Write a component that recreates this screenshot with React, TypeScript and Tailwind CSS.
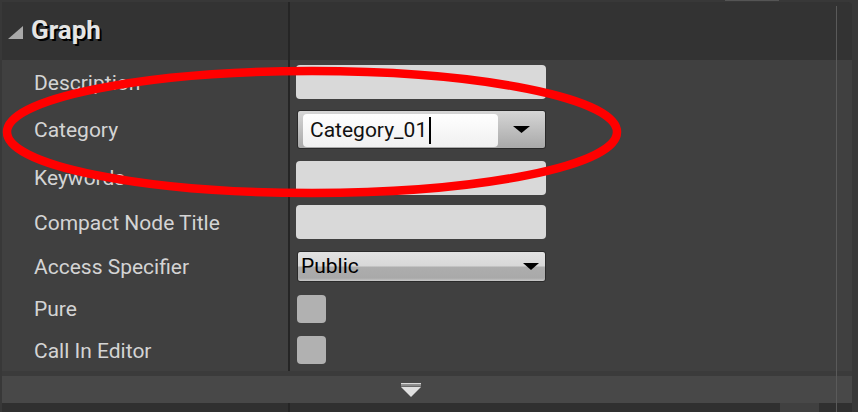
import React from "react";

const TextBox = () => <div className="w-[250px] h-[34px] bg-[#d9d9d9] rounded-[4px]" />;

const Checkbox = () => <div className="ml-[1px] w-[29px] h-[28px] bg-[#b1b1b1] rounded-[4px]" />;

const Arrow = ({ w, h }: { w: number; h: number }) => (
  <svg width={w} height={h} viewBox={`0 0 ${w} ${h}`}>
    <polygon points={`0,0 ${w},0 ${w / 2},${h}`} fill="#000" />
  </svg>
);

const CategoryCombo = () => (
  <div className="ml-[1px] w-[249px] h-[39px] rounded-[3px] border border-[#2a2a2a] bg-gradient-to-b from-[#d6d6d6] to-[#a9a9a9] flex items-stretch">
    <div className="ml-[5px] mt-[3px] mb-[1px] w-[195px] rounded-[4px] bg-gradient-to-b from-[#ffffff] to-[#f0f0f0] flex items-center pl-[7px]">
      <span className="text-[21px] text-[#111] leading-none font-['Roboto',sans-serif]">Category_01</span>
      <span className="ml-[2px] w-[2px] h-[27px] bg-[#000]" />
    </div>
    <div className="flex-1 flex items-center justify-center">
      <Arrow w={17} h={7} />
    </div>
  </div>
);

const AccessDropdown = () => (
  <div className="ml-[1px] w-[249px] h-[31px] rounded-[3px] border border-[#2a2a2a] overflow-hidden relative bg-[linear-gradient(to_bottom,#e2e2e2_0%,#d8d8d8_48%,#adadad_52%,#a9a9a9_90%,#c8c8c8_100%)] flex items-center pl-[3px] pr-[6px]">
    <span className="flex-1 text-[21px] text-[#000] leading-none font-['Roboto',sans-serif]">Public</span>
    <Arrow w={16} h={7} />
  </div>
);

const Row = ({ label, h, children }: { label: string; h: string; children: React.ReactNode }) => (
  <div className={`flex ${h}`}>
    <div className="w-[286px] flex items-center pl-[32px] pt-[3px] text-[21px] text-[#d4d4d4] font-['Roboto',sans-serif]">
      {label}
    </div>
    <div className="w-[2px] bg-[#252525]" />
    <div className="flex-1 flex items-center pl-[6px]">{children}</div>
  </div>
);

export default function App() {
  return (
    <div className="w-[858px] h-[412px] bg-[#383838] relative overflow-hidden font-['Roboto',sans-serif]">
      {/* top strip */}
      <div className="h-[2px] flex">
        <div className="ml-[725px] w-[54px] h-[1px] bg-[#555555]" />
      </div>
      <div className="ml-[2px] w-[850px] flex flex-col">
        {/* header */}
        <div className="h-[58px] flex bg-[#333333] rounded-tr-[4px]">
          <div className="w-[286px] flex items-center pl-[6px] pb-[2px]">
            <svg width="16" height="14" viewBox="0 0 16 14" className="mt-[6px]">
              <polygon points="0,13 15,13 15,0" fill="#a9a9a9" />
            </svg>
            <span className="ml-[7px] text-[26px] font-bold text-[#e4e4e4] [text-shadow:2px_2px_0_#000] leading-none">
              Graph
            </span>
          </div>
          <div className="w-[2px] bg-[#252525]" />
          <div className="flex-1" />
        </div>
        {/* rows */}
        <div className="bg-[#404040] flex flex-col">
          <Row label="Description" h="h-[44px]">
            <TextBox />
          </Row>
          <Row label="Category" h="h-[51px]">
            <CategoryCombo />
          </Row>
          <Row label="Keywords" h="h-[45px]">
            <TextBox />
          </Row>
          <Row label="Compact Node Title" h="h-[44px]">
            <TextBox />
          </Row>
          <Row label="Access Specifier" h="h-[44px]">
            <AccessDropdown />
          </Row>
          <Row label="Pure" h="h-[41px]">
            <Checkbox />
          </Row>
          <Row label="Call In Editor" h="h-[42px]">
            <Checkbox />
          </Row>
        </div>
        <div className="h-[5px] bg-[#3b3b3b]" />
        {/* bottom bar */}
        <div className="h-[27px] bg-[#484848] flex items-center justify-center pr-[32px]">
          <svg width="20" height="15" viewBox="0 0 20 15" className="mt-[1px]">
            <rect x="0" y="0" width="20" height="1.5" fill="#d8d8d8" />
            <rect x="0" y="2" width="20" height="1.5" fill="#8a8a8a" />
            <polygon points="0,4 20,4 10,14" fill="#e0e0e0" />
          </svg>
        </div>
        <div className="h-[9px] bg-[#303030] flex">
          <div className="w-[286px]" />
          <div className="w-[2px] bg-[#252525]" />
          <div className="ml-[490px] w-[39px] bg-[#404040]" />
        </div>
      </div>
      {/* scrollbar line */}
      <div className="absolute left-[836px] top-[6px] w-[1px] h-[406px] bg-[#5a5a5a]" />
      {/* red annotation ellipse */}
      <svg className="absolute left-0 top-0 pointer-events-none" width="858" height="412">
        <ellipse cx="312" cy="132" rx="305" ry="61" fill="none" stroke="#ff0000" strokeWidth="8.5" />
      </svg>
    </div>
  );
}
